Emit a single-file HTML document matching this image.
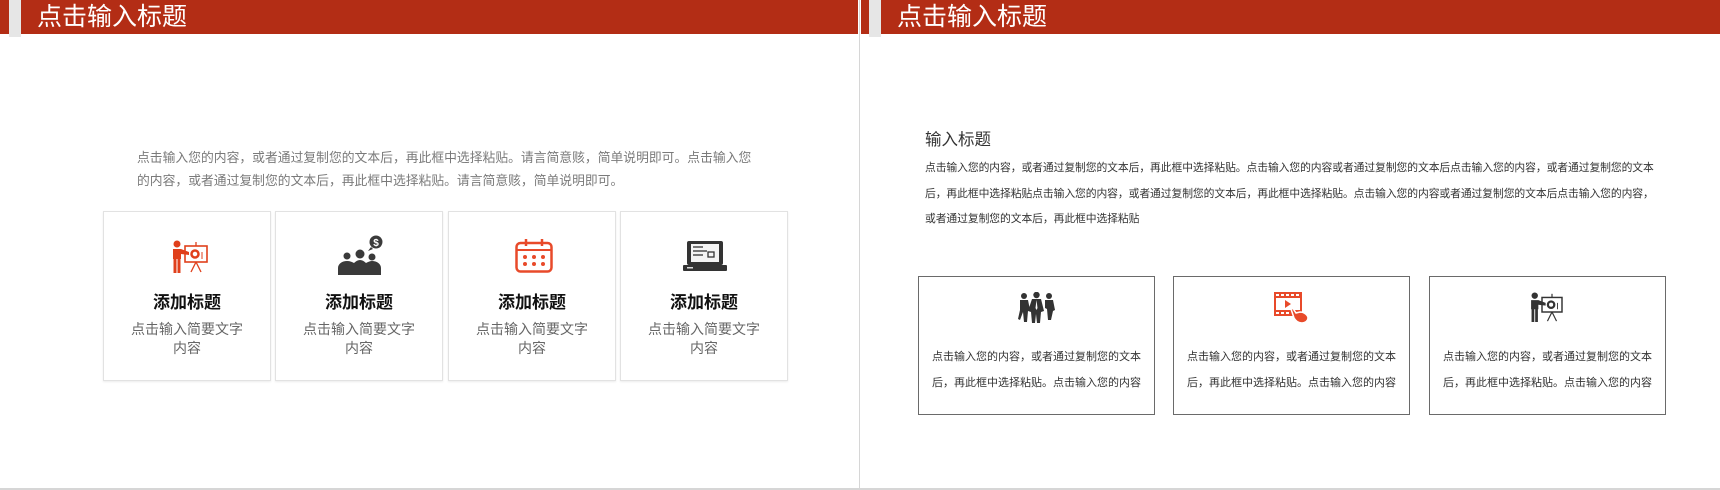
<!DOCTYPE html>
<html><head><meta charset="utf-8"><style>
*{margin:0;padding:0;box-sizing:border-box}
body{width:1720px;height:490px;background:#fff;position:relative;overflow:hidden;font-family:"Liberation Sans","Noto Sans CJK SC",sans-serif}
.abs{position:absolute}
.hdr{top:0;height:34px;background:#b32d15}
.strip{top:0;width:12px;height:37px;background:#e6e6e6}
.ttl{top:2px;color:#fff;font-size:25px;line-height:30px;white-space:nowrap}
.c1{top:211px;width:168px;height:170px;border:1.5px solid #e2e2e2;box-shadow:0 1px 2px rgba(0,0,0,.08);text-align:center}
.t1{top:288px;width:168px;text-align:center;font-size:17px;font-weight:bold;color:#111}
.s1{width:168px;text-align:center;font-size:14px;line-height:19px;color:#666}
.c2{top:276px;width:237px;height:139px;border:1.5px solid #6a6a6a}
.s2{width:237px;text-align:center;font-size:11px;line-height:26px;color:#333}
</style></head><body>
<div class="abs hdr" style="left:0;width:858px"></div>
<div class="abs strip" style="left:9px"></div>
<div class="abs ttl" style="left:37px">点击输入标题</div>
<div class="abs hdr" style="left:861px;width:859px"></div>
<div class="abs strip" style="left:869px"></div>
<div class="abs ttl" style="left:897px">点击输入标题</div>
<div class="abs" style="left:859px;top:0;width:1px;height:490px;background:#d6d6d6"></div>
<div class="abs" style="left:0;top:488px;width:1720px;height:2px;background:#d6d6d6"></div>

<div class="abs" style="left:137px;top:146px;width:620px;font-size:12.8px;line-height:23px;color:#7a7a7a">点击输入您的内容，或者通过复制您的文本后，再此框中选择粘贴。请言简意赅，简单说明即可。点击输入您的内容，或者通过复制您的文本后，再此框中选择粘贴。请言简意赅，简单说明即可。</div>

<div class="abs c1" style="left:103px"></div>
<div class="abs c1" style="left:275px"></div>
<div class="abs c1" style="left:448px"></div>
<div class="abs c1" style="left:620px"></div>
<div class="abs t1" style="left:103px">添加标题</div>
<div class="abs t1" style="left:275px">添加标题</div>
<div class="abs t1" style="left:448px">添加标题</div>
<div class="abs t1" style="left:620px">添加标题</div>
<div class="abs s1" style="left:103px;top:320px">点击输入简要文字<br>内容</div>
<div class="abs s1" style="left:275px;top:320px">点击输入简要文字<br>内容</div>
<div class="abs s1" style="left:448px;top:320px">点击输入简要文字<br>内容</div>
<div class="abs s1" style="left:620px;top:320px">点击输入简要文字<br>内容</div>

<svg class="abs" style="left:172px;top:240px" width="37" height="33" viewBox="0 0 37 33">
<g fill="#e0401c" stroke="#e0401c"><circle cx="5" cy="4" r="3.5" stroke="none"/>
<path d="M1 9h8l8 3v3l-8-1v5h-8z" stroke="none"/><rect x="1.5" y="18" width="3" height="15" stroke="none"/><rect x="5.5" y="18" width="3" height="15" stroke="none"/>
<rect x="13" y="6" width="22" height="16" fill="none" stroke-width="1.6"/><circle cx="23" cy="14" r="3.5" fill="none" stroke-width="2.5"/><line x1="30" y1="12" x2="30" y2="19" stroke-width="1"/>
<line x1="24" y1="22" x2="19" y2="32" stroke-width="1.3"/><line x1="24" y1="22" x2="29" y2="32" stroke-width="1.3"/><line x1="24" y1="2" x2="24" y2="6" stroke-width="1.3"/></g></svg>
<svg class="abs" style="left:338px;top:235px" width="46" height="40" viewBox="0 0 46 40">
<g fill="#3a3a3a"><circle cx="38" cy="7" r="6.5"/><path d="M33 12l-3 4 5-2z"/>
<circle cx="9" cy="21" r="3.5"/><circle cx="22" cy="19" r="4.5"/><circle cx="34" cy="22" r="3.5"/>
<path d="M0 40v-7c0-4 4-7 9-7 3 0 5 1 7 2 2-2 4-3 6-3s4 1 6 3c2-1 4-2 6-2 5 0 9 3 9 7v7z"/></g>
<text x="38" y="11" fill="#fff" font-size="10" font-weight="bold" text-anchor="middle" font-family="Liberation Sans">$</text></svg>
<svg class="abs" style="left:515px;top:239px" width="38" height="34" viewBox="0 0 38 34">
<g fill="#e84a2a" stroke="#e84a2a"><rect x="1.5" y="4" width="35" height="28.5" rx="4" fill="none" stroke-width="2.5"/><line x1="2" y1="11" x2="36" y2="11" stroke-width="2"/>
<line x1="11" y1="0" x2="11" y2="7" stroke-width="2.5"/><line x1="27" y1="0" x2="27" y2="7" stroke-width="2.5"/>
<g stroke="none"><circle cx="10" cy="18" r="2"/><circle cx="19" cy="18" r="2"/><circle cx="28" cy="18" r="2"/><circle cx="10" cy="25" r="2"/><circle cx="19" cy="25" r="2"/><circle cx="28" cy="25" r="2"/></g></g></svg>
<svg class="abs" style="left:683px;top:240px" width="44" height="32" viewBox="0 0 44 32">
<rect x="4" y="1" width="36" height="24" rx="2" fill="#333"/><rect x="8" y="4" width="28" height="18" fill="#f4f4f4"/>
<g stroke="#333" stroke-width="1.3"><line x1="10" y1="7" x2="20" y2="7"/><line x1="10" y1="11" x2="24" y2="11"/><line x1="10" y1="15" x2="20" y2="15"/></g><rect x="25" y="12" width="6" height="5" fill="none" stroke="#333" stroke-width="1.3"/>
<rect x="0" y="25" width="44" height="6" rx="1" fill="#333"/><rect x="4" y="27" width="6" height="1.5" fill="#ddd"/></svg>

<div class="abs" style="left:925px;top:126px;font-size:16.5px;color:#333">输入标题</div>
<div class="abs" style="left:925px;top:156px;width:745px;font-size:10.8px;letter-spacing:-0.08px;line-height:25.7px;color:#333">点击输入您的内容，或者通过复制您的文本后，再此框中选择粘贴。点击输入您的内容或者通过复制您的文本后点击输入您的内容，或者通过复制您的文本<br>后，再此框中选择粘贴点击输入您的内容，或者通过复制您的文本后，再此框中选择粘贴。点击输入您的内容或者通过复制您的文本后点击输入您的内容，<br>或者通过复制您的文本后，再此框中选择粘贴</div>
<div class="abs c2" style="left:918px"></div>
<div class="abs c2" style="left:1173px"></div>
<div class="abs c2" style="left:1429px"></div>
<div class="abs s2" style="left:918px;top:344px">点击输入您的内容，或者通过复制您的文本<br>后，再此框中选择粘贴。点击输入您的内容</div>
<div class="abs s2" style="left:1173px;top:344px">点击输入您的内容，或者通过复制您的文本<br>后，再此框中选择粘贴。点击输入您的内容</div>
<div class="abs s2" style="left:1429px;top:344px">点击输入您的内容，或者通过复制您的文本<br>后，再此框中选择粘贴。点击输入您的内容</div>

<svg class="abs" style="left:1018px;top:292px" width="37" height="31" viewBox="0 0 37 31">
<g fill="#333"><circle cx="6" cy="4" r="3"/><circle cx="18.5" cy="3" r="3.2"/><circle cx="31" cy="4" r="3"/>
<path d="M2 8h8l2 10-2 1-1 11h-3l-1-10-3 8-2-1 2-9z"/><path d="M27 8h8l2 10-2 1-2 9h-3l-1-11-2-1z"/>
<path d="M14 7h9l3 12-3 1-1 11h-3l-1-9-1 9h-3l-1-11-3-1z"/></g><path d="M18.5 8l-1 8 1 2 1-2z" fill="#fff"/></svg>
<svg class="abs" style="left:1274px;top:292px" width="36" height="31" viewBox="0 0 36 31">
<g fill="#e84a2a"><rect x="0" y="0" width="28" height="24"/></g>
<g fill="#fff"><rect x="2" y="2" width="3" height="2"/><rect x="7" y="2" width="3" height="2"/><rect x="12" y="2" width="3" height="2"/><rect x="17" y="2" width="3" height="2"/><rect x="22" y="2" width="3" height="2"/>
<rect x="2" y="20" width="3" height="2"/><rect x="7" y="20" width="3" height="2"/><rect x="12" y="20" width="3" height="2"/><rect x="2" y="6" width="24" height="12"/></g>
<path d="M11 8v8l6-4z" fill="#e84a2a"/>
<path d="M17 17c1-1 3 0 3 1l2 3 4-1c4 0 8 3 8 6 0 3-3 5-6 5-4 0-6-2-8-5z" fill="#e84a2a" stroke="#fff" stroke-width="1.5"/></svg>
<svg class="abs" style="left:1530px;top:292px" width="34" height="30" viewBox="0 0 37 33">
<g fill="#333" stroke="#333"><circle cx="5" cy="4" r="3.5" stroke="none"/>
<path d="M1 9h8l8 3v3l-8-1v5h-8z" stroke="none"/><rect x="1.5" y="18" width="3" height="15" stroke="none"/><rect x="5.5" y="18" width="3" height="15" stroke="none"/>
<rect x="13" y="6" width="22" height="16" fill="none" stroke-width="1.6"/><circle cx="23" cy="14" r="3.5" fill="none" stroke-width="2.5"/><line x1="30" y1="12" x2="30" y2="19" stroke-width="1"/>
<line x1="24" y1="22" x2="19" y2="32" stroke-width="1.3"/><line x1="24" y1="22" x2="29" y2="32" stroke-width="1.3"/><line x1="24" y1="2" x2="24" y2="6" stroke-width="1.3"/></g></svg>
</body></html>
